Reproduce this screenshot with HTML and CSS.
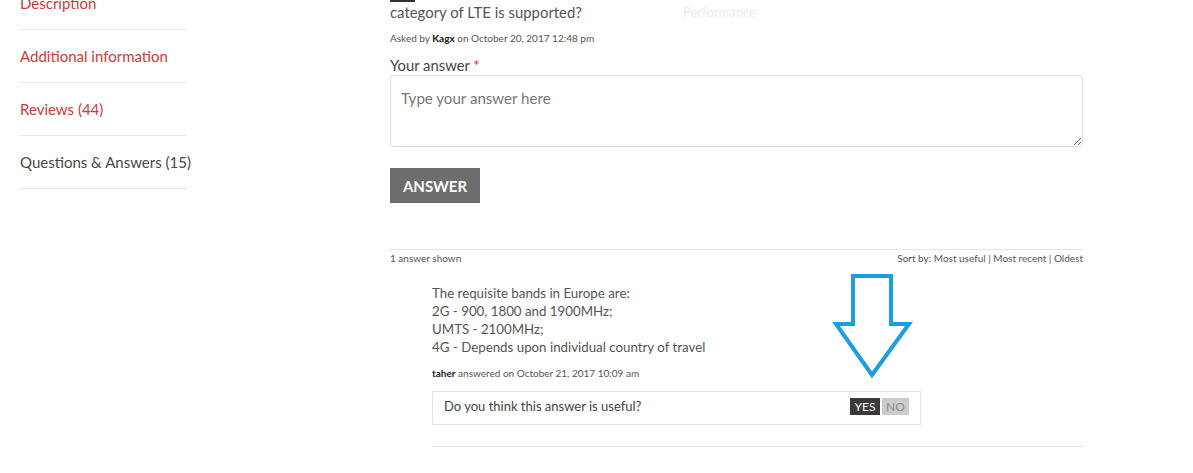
FILE: index.html
```html
<!DOCTYPE html>
<html lang="en">
<head>
<meta charset="utf-8">
<title>Questions &amp; Answers</title>
<link rel="stylesheet" href="styles.css">
</head>
<body>
<div class="page">
  <aside class="tabs">
    <ul class="tab-list">
      <li class="tab"><a class="tab-link" href="#">Description</a></li>
      <li class="tab"><a class="tab-link" href="#">Additional information</a></li>
      <li class="tab"><a class="tab-link" href="#">Reviews (44)</a></li>
      <li class="tab"><a class="tab-link active" href="#">Questions &amp; Answers (15)</a></li>
    </ul>
  </aside>
  <main class="qa">
    <div class="q-mark"></div>
    <div class="q-row">
      <span class="q-text">category of LTE is supported?</span>
      <span class="ghost">Performance</span>
    </div>
    <div class="asked">Asked by <b>Kagx</b> on October 20, 2017 12:48 pm</div>
    <label class="answer-label" for="ans">Your answer <span class="req">*</span></label>
    <textarea id="ans" class="answer-input" placeholder="Type your answer here"></textarea>
    <button class="answer-btn" type="button">Answer</button>
    <div class="list-head">
      <span>1 answer shown</span>
      <span>Sort by: Most useful | Most recent | Oldest</span>
    </div>
    <div class="answer">
      <p class="answer-text">The requisite bands in Europe are:<br>2G - 900, 1800 and 1900MHz;<br>UMTS - 2100MHz;<br>4G - Depends upon individual country of travel</p>
      <div class="meta"><b>taher</b> answered on October 21, 2017 10:09 am</div>
      <div class="useful">
        <span>Do you think this answer is useful?</span>
        <span class="votes"><span class="vote yes">YES</span><span class="vote no">NO</span></span>
      </div>
    </div>
  </main>
  <svg class="arrow" width="84" height="108" viewBox="0 0 84 108" aria-hidden="true">
    <path d="M23 4 H61 V52 H79 L42 103 L6 52 H23 Z" fill="none" stroke="#1a9fe0" stroke-width="4" stroke-linejoin="miter"/>
  </svg>
</div>
</body>
</html>
```

FILE: styles.css
```css
* { box-sizing: border-box; }
html, body { margin: 0; padding: 0; background: #fff; }
body {
  font-family: Lato, "Open Sans", sans-serif;
  color: #555;
  overflow: hidden;
  height: 473px;
}
.page {
  position: relative;
  display: flex;
  align-items: flex-start;
  padding-left: 20px;
}
.tabs { width: 167px; flex: none; }
.tab-list { list-style: none; margin: -23px 0 0; padding: 0; }
.tab {
  height: 53px;
  padding-bottom: 0;
  border-bottom: 1px solid #e8e8e8;
  display: flex;
  align-items: center;
}
.tab-link {
  font-size: 15px;
  color: #cc3b3b;
  text-decoration: none;
  white-space: nowrap;
}
.tab-link.active { color: #484848; }

.qa {
  width: 693px;
  margin-left: 203px;
  flex: none;
}
.q-mark { width: 25px; height: 2px; background: #333; }
.q-row {
  display: flex;
  line-height: 20px;
  font-size: 14.9px;
}
.q-text { color: #555; }
.ghost {
  margin-left: 101px;
  font-size: 13px;
  color: #ececec;
}
.asked {
  margin-top: 9px;
  font-size: 10px;
  line-height: 14px;
  color: #555;
}
.asked b { color: #111; }
.answer-label {
  display: block;
  margin-top: 12px;
  font-size: 14.8px;
  line-height: 17px;
  color: #444;
}
.req { color: #d33; }
.answer-input {
  display: block;
  width: 693px;
  height: 72px;
  margin: 1px 0 0;
  padding: 11px 10px;
  border: 1px solid #e0e0e0;
  border-radius: 3px;
  font-family: inherit;
  font-size: 15.1px;
  line-height: 22px;
  color: #555;
  resize: vertical;
}
.answer-input::placeholder { color: #777; }
.answer-btn {
  display: block;
  margin-top: 21px;
  width: 90px;
  height: 35px;
  border: 0;
  padding: 0;
  background: #6d6d6d;
  color: #fff;
  font-family: inherit;
  font-weight: 700;
  font-size: 15px;
  text-transform: uppercase;
  text-align: center;
}
.list-head {
  margin-top: 46px;
  border-top: 1px solid #e5e5e5;
  padding-top: 1px;
  display: flex;
  justify-content: space-between;
  font-size: 10px;
  line-height: 14px;
  color: #555;
}
.answer {
  margin-left: 42px;
  margin-top: 19px;
  padding-bottom: 21px;
  border-bottom: 1px solid #e5e5e5;
}
.answer-text {
  margin: 0;
  font-size: 13.3px;
  line-height: 18px;
  color: #555;
}
.meta {
  margin-top: 10px;
  font-size: 10px;
  line-height: 14px;
  color: #555;
}
.meta b { color: #222; }
.useful {
  margin-top: 11px;
  width: 489px;
  height: 34px;
  border: 1px solid #e3e3e3;
  padding: 0 11px 4px 11px;
  display: flex;
  align-items: center;
  justify-content: space-between;
  font-size: 13px;
  color: #444;
}
.votes { display: flex; gap: 2px; }
.vote {
  height: 17px;
  line-height: 17px;
  font-size: 12px;
  text-align: center;
}
.vote.yes { width: 30px; background: #3a3a3a; color: #fff; }
.vote.no { width: 27px; background: #ccc; color: #888; }

.arrow {
  position: absolute;
  left: 830px;
  top: 272px;
}
```
